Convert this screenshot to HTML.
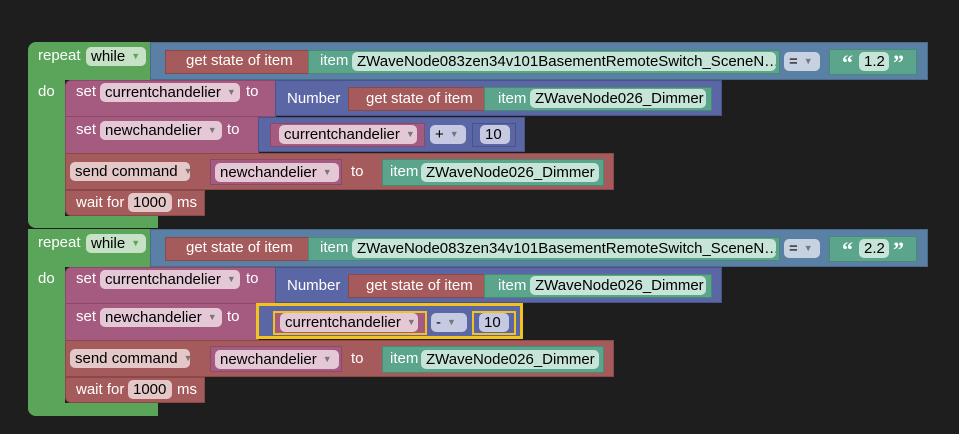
<!DOCTYPE html>
<html><head><meta charset="utf-8"><style>
body{margin:0;width:959px;height:434px;background:#1e1e1e;overflow:hidden;font-family:"Liberation Sans",Arial,sans-serif;font-size:15px;}
.b{position:absolute;box-sizing:border-box;}
.g{background:#5ba55b;}
.cb{background:#5b80a5;border:1px solid #4a6a8a;}
.r{background:#a55b5b;border:1px solid #8a4848;}
.p{background:#a55b80;border:1px solid #8a486a;}
.nb{background:#5b67a5;border:1px solid #48538a;}
.t{background:#5ba58c;border:1px solid #488a73;}
.l{position:absolute;color:#fff;line-height:18px;white-space:nowrap;}
.f{position:absolute;height:19px;line-height:19px;border-radius:5px;color:#000;padding:0 5px;box-sizing:border-box;white-space:nowrap;overflow:hidden;}
.fg{background:#c6e1c6;}
.fr{background:#e4c8c8;}
.fp{background:#e4c8d6;}
.ft{background:#c6e4d8;}
.fb{background:#c5c9e1;}
.fc{background:#c6d2e1;}
.a{font-size:9px;color:#777;margin-left:6px;vertical-align:2px;}
.q{position:absolute;color:#fff;font-weight:bold;font-size:22px;line-height:22px;font-family:"Liberation Serif",serif;}
.grp{position:absolute;left:0;width:959px;height:200px;}
</style></head><body>

<!-- group 1 -->
<div class="grp" style="top:0">
<div class="b g" style="left:28px;top:42px;width:132px;height:38px;border-radius:8px 0 0 0"></div>
<div class="b g" style="left:28px;top:78px;width:37px;height:150px;border-radius:0 0 0 8px"></div>
<div class="b g" style="left:28px;top:216px;width:130px;height:12px;border-radius:0 0 0 8px"></div>
<div class="l" style="left:38px;top:47px">repeat</div>
<div class="f fg" style="left:86px;top:47px;width:60px">while<span class="a" style="color:#5ba55b">▼</span></div>
<div class="l" style="left:38px;top:83px">do</div>

<div class="b cb" style="left:150px;top:42px;width:778px;height:38px"></div>
<div class="b r" style="left:165px;top:50px;width:146px;height:24px"></div>
<div class="l" style="left:186px;top:52px">get state of item</div>
<div class="b t" style="left:308px;top:50px;width:472px;height:24px"></div>
<div class="l" style="left:320px;top:52px">item</div>
<div class="f ft" style="left:352px;top:52px;width:424px">ZWaveNode083zen34v101BasementRemoteSwitch_SceneN…</div>
<div class="f fc" style="left:784px;top:52px;width:36px">=<span class="a">▼</span></div>
<div class="b t" style="left:829px;top:49px;width:88px;height:26px"></div>
<div class="q" style="left:842px;top:52px">“</div>
<div class="f ft" style="left:859px;top:52px;width:30px">1.2</div>
<div class="q" style="left:893px;top:52px">”</div>

<div class="b p" style="left:65px;top:80px;width:211px;height:37px;border-radius:6px 0 0 0"></div>
<div class="l" style="left:76px;top:83px">set</div>
<div class="f fp" style="left:100px;top:83px;width:140px">currentchandelier<span class="a">▼</span></div>
<div class="l" style="left:246px;top:83px">to</div>
<div class="b nb" style="left:275px;top:80px;width:447px;height:36px"></div>
<div class="l" style="left:287px;top:90px">Number</div>
<div class="b r" style="left:348px;top:87px;width:140px;height:24px"></div>
<div class="l" style="left:366px;top:90px">get state of item</div>
<div class="b t" style="left:484px;top:87px;width:228px;height:24px"></div>
<div class="l" style="left:498px;top:90px">item</div>
<div class="f ft" style="left:530px;top:89px;width:176px">ZWaveNode026_Dimmer</div>

<div class="b p" style="left:65px;top:116px;width:194px;height:38px"></div>
<div class="l" style="left:76px;top:121px">set</div>
<div class="f fp" style="left:100px;top:121px;width:122px">newchandelier<span class="a">▼</span></div>
<div class="l" style="left:227px;top:121px">to</div>
<div class="b nb" style="left:258px;top:117px;width:267px;height:35px"></div>
<div class="b p" style="left:270px;top:123px;width:155px;height:24px"></div>
<div class="f fp" style="left:279px;top:125px;width:138px">currentchandelier<span class="a">▼</span></div>
<div class="f fb" style="left:430px;top:125px;width:36px">+<span class="a">▼</span></div>
<div class="b nb" style="left:472px;top:123px;width:44px;height:24px"></div>
<div class="f fb" style="left:480px;top:125px;width:30px">10</div>

<div class="b r" style="left:65px;top:153px;width:549px;height:37px"></div>
<div class="f fr" style="left:70px;top:162px;width:120px">send command<span class="a">▼</span></div>
<div class="b p" style="left:210px;top:159px;width:132px;height:26px"></div>
<div class="f fp" style="left:215px;top:163px;width:124px">newchandelier<span class="a">▼</span></div>
<div class="l" style="left:351px;top:163px">to</div>
<div class="b t" style="left:382px;top:159px;width:222px;height:27px"></div>
<div class="l" style="left:390px;top:163px">item</div>
<div class="f ft" style="left:421px;top:163px;width:178px">ZWaveNode026_Dimmer</div>

<div class="b r" style="left:65px;top:190px;width:140px;height:26px;border-radius:0 0 0 6px"></div>
<div class="l" style="left:76px;top:194px">wait for</div>
<div class="f fr" style="left:128px;top:193px;width:44px">1000</div>
<div class="l" style="left:177px;top:194px">ms</div>
</div>

<!-- group 2 -->
<div class="grp" style="top:187px">
<div class="b g" style="left:28px;top:42px;width:132px;height:38px;border-radius:0"></div>
<div class="b g" style="left:28px;top:78px;width:37px;height:151px;border-radius:0 0 0 8px"></div>
<div class="b g" style="left:28px;top:216px;width:130px;height:13px;border-radius:0 0 0 8px"></div>
<div class="l" style="left:38px;top:47px">repeat</div>
<div class="f fg" style="left:86px;top:47px;width:60px">while<span class="a" style="color:#5ba55b">▼</span></div>
<div class="l" style="left:38px;top:83px">do</div>

<div class="b cb" style="left:150px;top:42px;width:778px;height:38px"></div>
<div class="b r" style="left:165px;top:50px;width:146px;height:24px"></div>
<div class="l" style="left:186px;top:52px">get state of item</div>
<div class="b t" style="left:308px;top:50px;width:472px;height:24px"></div>
<div class="l" style="left:320px;top:52px">item</div>
<div class="f ft" style="left:352px;top:52px;width:424px">ZWaveNode083zen34v101BasementRemoteSwitch_SceneN…</div>
<div class="f fc" style="left:784px;top:52px;width:36px">=<span class="a">▼</span></div>
<div class="b t" style="left:829px;top:49px;width:88px;height:26px"></div>
<div class="q" style="left:842px;top:52px">“</div>
<div class="f ft" style="left:859px;top:52px;width:30px">2.2</div>
<div class="q" style="left:893px;top:52px">”</div>

<div class="b p" style="left:65px;top:80px;width:211px;height:37px;border-radius:6px 0 0 0"></div>
<div class="l" style="left:76px;top:83px">set</div>
<div class="f fp" style="left:100px;top:83px;width:140px">currentchandelier<span class="a">▼</span></div>
<div class="l" style="left:246px;top:83px">to</div>
<div class="b nb" style="left:275px;top:80px;width:447px;height:36px"></div>
<div class="l" style="left:287px;top:90px">Number</div>
<div class="b r" style="left:348px;top:87px;width:140px;height:24px"></div>
<div class="l" style="left:366px;top:90px">get state of item</div>
<div class="b t" style="left:484px;top:87px;width:228px;height:24px"></div>
<div class="l" style="left:498px;top:90px">item</div>
<div class="f ft" style="left:530px;top:89px;width:176px">ZWaveNode026_Dimmer</div>

<div class="b p" style="left:65px;top:116px;width:194px;height:38px"></div>
<div class="l" style="left:76px;top:121px">set</div>
<div class="f fp" style="left:100px;top:121px;width:122px">newchandelier<span class="a">▼</span></div>
<div class="l" style="left:227px;top:121px">to</div>
<div class="b nb" style="left:256px;top:116px;width:267px;height:36px;border:3px solid #f4c21d"></div>
<div class="b p" style="left:273px;top:124px;width:154px;height:24px;border:2px solid #f4c21d"></div>
<div class="f fp" style="left:280px;top:126px;width:138px">currentchandelier<span class="a">▼</span></div>
<div class="f fb" style="left:431px;top:126px;width:36px">-<span class="a">▼</span></div>
<div class="b nb" style="left:472px;top:124px;width:44px;height:24px;border:2px solid #f4c21d"></div>
<div class="f fb" style="left:479px;top:126px;width:30px">10</div>

<div class="b r" style="left:65px;top:153px;width:549px;height:37px"></div>
<div class="f fr" style="left:70px;top:162px;width:120px">send command<span class="a">▼</span></div>
<div class="b p" style="left:210px;top:159px;width:132px;height:26px"></div>
<div class="f fp" style="left:215px;top:163px;width:124px">newchandelier<span class="a">▼</span></div>
<div class="l" style="left:351px;top:163px">to</div>
<div class="b t" style="left:382px;top:159px;width:222px;height:27px"></div>
<div class="l" style="left:390px;top:163px">item</div>
<div class="f ft" style="left:421px;top:163px;width:178px">ZWaveNode026_Dimmer</div>

<div class="b r" style="left:65px;top:190px;width:140px;height:26px;border-radius:0 0 0 6px"></div>
<div class="l" style="left:76px;top:194px">wait for</div>
<div class="f fr" style="left:128px;top:193px;width:44px">1000</div>
<div class="l" style="left:177px;top:194px">ms</div>
</div>
</body></html>
